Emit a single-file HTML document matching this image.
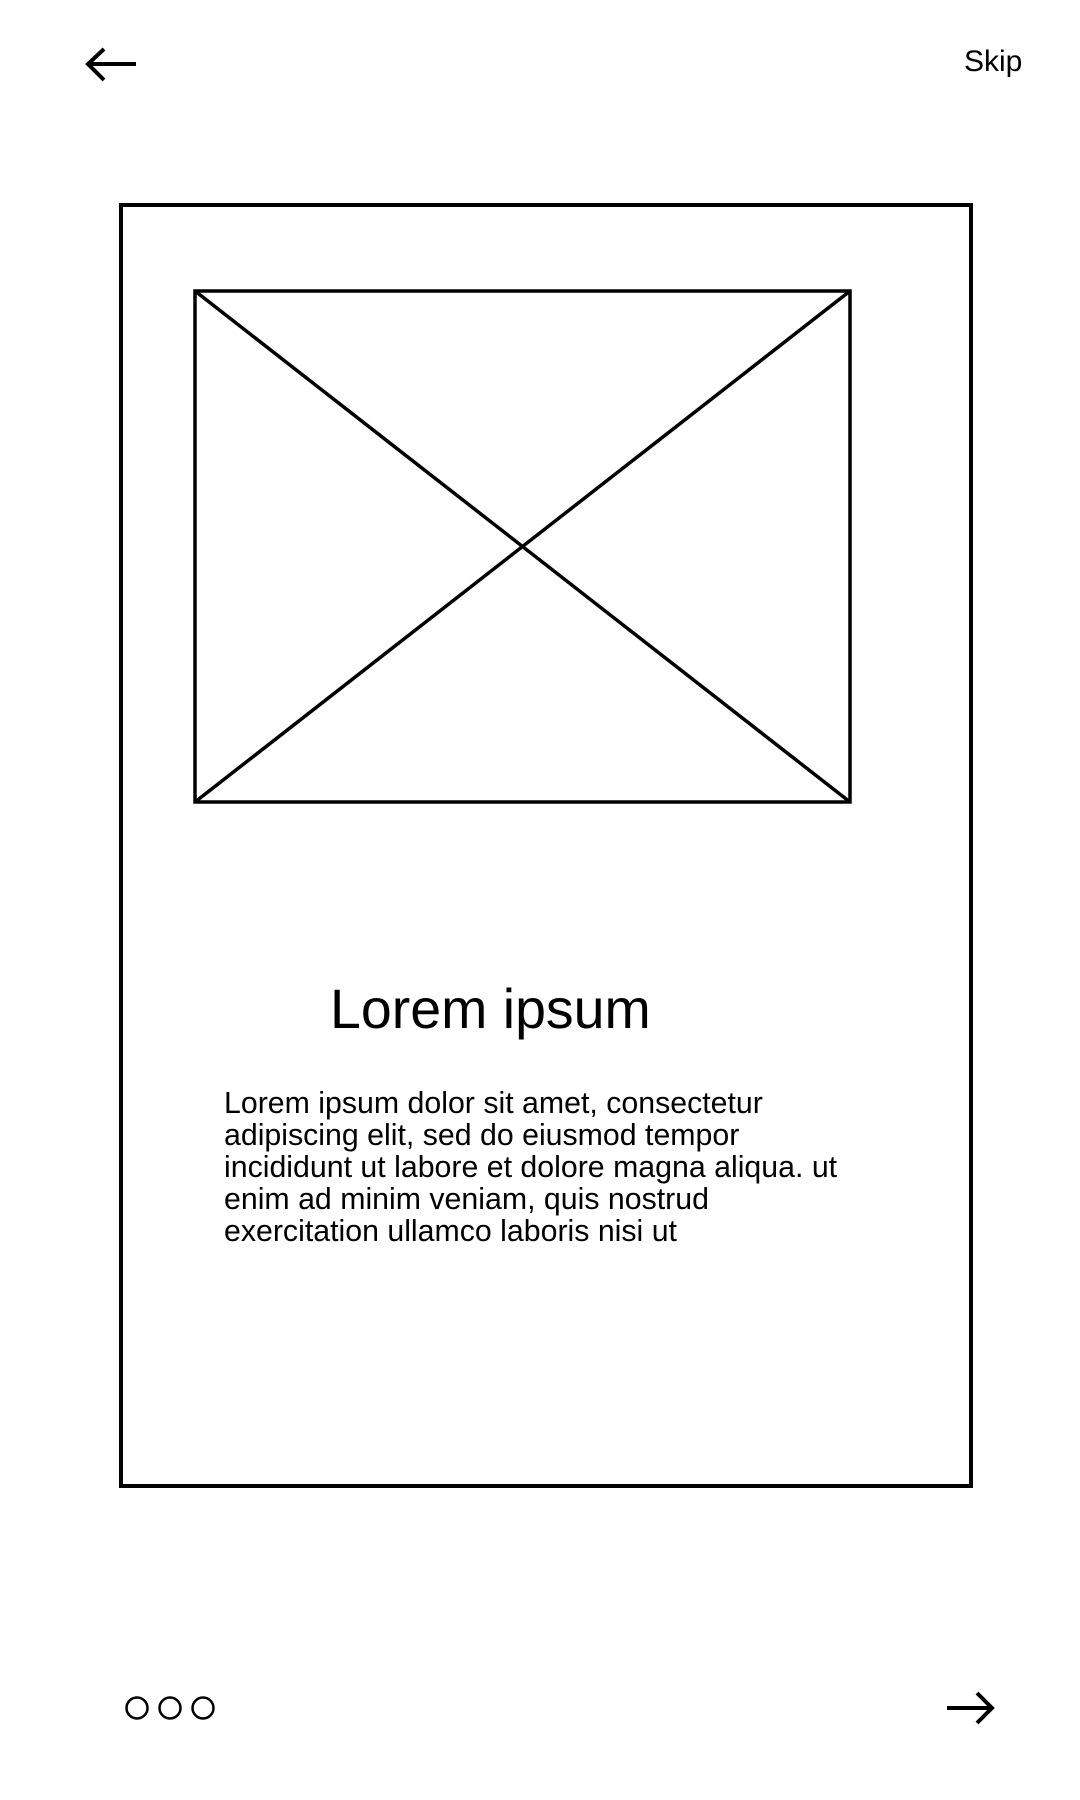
<!DOCTYPE html>
<html><head><meta charset="utf-8"><style>
html,body{margin:0;padding:0;background:#fff;}
body{width:1080px;height:1800px;position:relative;overflow:hidden;font-family:"Liberation Sans",Arial,sans-serif;color:#000;}
.abs{position:absolute;}
</style></head><body>
<svg class="abs" style="left:0;top:0" width="1080" height="1800">
  <path d="M88 64 H136 M104 49 L88 64 L104 80" fill="none" stroke="#000" stroke-width="4"/>
  <rect x="121" y="205" width="850" height="1281" fill="none" stroke="#000" stroke-width="4"/>
  <rect x="195" y="291" width="655" height="511" fill="none" stroke="#000" stroke-width="3.5"/>
  <path d="M195 291 L850 802 M850 291 L195 802" stroke="#000" stroke-width="3.5"/>
  <circle cx="137" cy="1708" r="10.5" fill="none" stroke="#000" stroke-width="2.5"/>
  <circle cx="170" cy="1708" r="10.5" fill="none" stroke="#000" stroke-width="2.5"/>
  <circle cx="203" cy="1708" r="10.5" fill="none" stroke="#000" stroke-width="2.5"/>
  <path d="M947 1708 H992 M977 1693 L992 1708 L977 1723" fill="none" stroke="#000" stroke-width="4"/>
</svg>
<div class="abs" style="left:964px;top:45px;font-size:30px;">Skip</div>
<div class="abs" style="left:330px;top:977px;font-size:55.5px;line-height:64px;white-space:nowrap;">Lorem ipsum</div>
<div class="abs" style="left:224px;top:1088px;font-size:30.3px;line-height:32px;white-space:nowrap;">Lorem ipsum dolor sit amet, consectetur<br>adipiscing elit, sed do eiusmod tempor<br>incididunt ut labore et dolore magna aliqua. ut<br>enim ad minim veniam, quis nostrud<br>exercitation ullamco laboris nisi ut</div>
</body></html>
